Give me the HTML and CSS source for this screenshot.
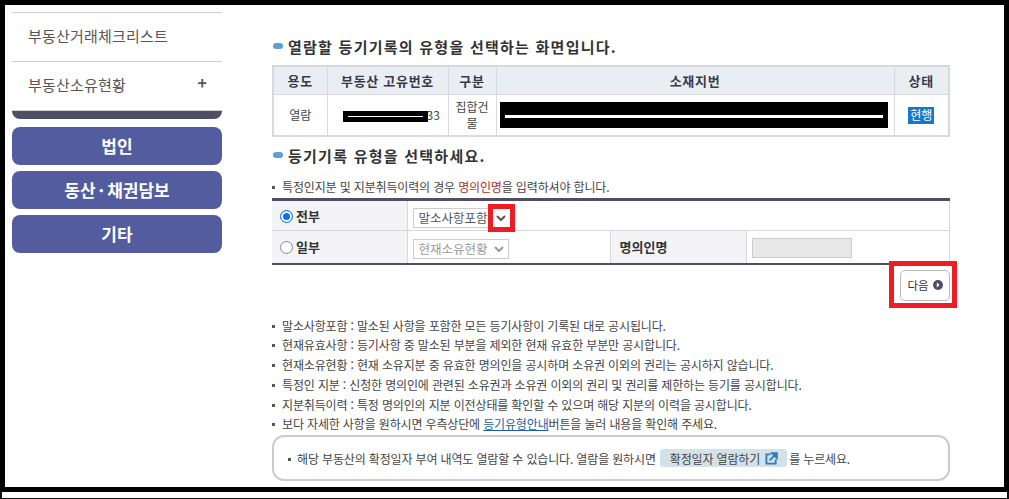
FILE: index.html
```html
<!DOCTYPE html>
<html lang="ko">
  <head>
    <meta charset="UTF-8">
    <title>등기기록 유형 선택</title>
    <link rel="stylesheet" href="styles.css">
  </head>
  <body>
    <div class="frame">
      <aside class="side">
        <div class="side-menu">
          <a class="side-item"><span>부동산거래체크리스트</span></a>
          <a class="side-item"><span>부동산소유현황</span> <span class="plus">+</span></a>
        </div>
        <div class="side-cap"></div>
        <a class="side-btn">법인</a>
        <a class="side-btn">동산<span class="dot">·</span>채권담보</a>
        <a class="side-btn">기타</a>
      </aside>

      <main class="content">
        <h3 class="title">열람할 등기기록의 유형을 선택하는 화면입니다.</h3>
        <table class="info">
          <colgroup>
            <col class="c-use">
            <col class="c-no">
            <col class="c-type">
            <col>
            <col class="c-state">
          </colgroup>
          <tr>
            <th>용도</th>
            <th>부동산 고유번호</th>
            <th>구분</th>
            <th>소재지번</th>
            <th>상태</th>
          </tr>
          <tr>
            <td>열람</td>
            <td class="no-cell"><span class="redact-no"><span class="strip-no"></span></span>33</td>
            <td>집합건물</td>
            <td class="addr-cell"><div class="redact-addr"><div class="strip-addr"></div></div></td>
            <td><span class="badge">현행</span></td>
          </tr>
        </table>

        <h3 class="title title2">등기기록 유형을 선택하세요.</h3>
        <p class="note">특정인지분 및 지분취득이력의 경우 <em>명의인명</em>을 입력하셔야 합니다.</p>

        <table class="pick">
          <colgroup>
            <col class="c-radio">
            <col class="c-sel">
            <col class="c-name">
            <col>
          </colgroup>
          <tr class="row-all">
            <th><span class="radio on"></span>전부</th>
            <td colspan="3" class="sel-cell">
              <span class="select-box">말소사항포함<span class="chev-mark"><svg class="chev" viewBox="0 0 10 6" width="10" height="6"><path d="M1 1l4 4 4-4" /></svg></span></span>
            </td>
          </tr>
          <tr class="row-part">
            <th><span class="radio"></span>일부</th>
            <td class="sel-cell">
              <span class="select-box off">현재소유현황<svg class="chev" viewBox="0 0 10 6" width="10" height="6"><path d="M1 1l4 4 4-4" /></svg></span>
            </td>
            <th>명의인명</th>
            <td class="sel-cell"><span class="name-input"></span></td>
          </tr>
        </table>

        <div class="next-row">
          <div class="next-mark">
            <a class="next-btn">다음 <svg viewBox="0 0 10 10" width="10" height="10"><circle cx="5" cy="5" r="5" fill="#4f4d66" /><path d="M3.8 2.6L6.6 5 3.8 7.4z" fill="#fff" /></svg></a>
          </div>
        </div>

        <ul class="guide">
          <li>말소사항포함 : 말소된 사항을 포함한 모든 등기사항이 기록된 대로 공시됩니다.</li>
          <li>현재유효사항 : 등기사항 중 말소된 부분을 제외한 현재 유효한 부분만 공시합니다.</li>
          <li>현재소유현황 : 현재 소유지분 중 유효한 명의인을 공시하며 소유권 이외의 권리는 공시하지 않습니다.</li>
          <li>특정인 지분 : 신청한 명의인에 관련된 소유권과 소유권 이외의 권리 및 권리를 제한하는 등기를 공시합니다.</li>
          <li>지분취득이력 : 특정 명의인의 지분 이전상태를 확인할 수 있으며 해당 지분의 이력을 공시합니다.</li>
          <li>보다 자세한 사항을 원하시면 우측상단에 <a class="link">등기유형안내</a>버튼을 눌러 내용을 확인해 주세요.</li>
        </ul>

        <div class="notice">
          <span class="notice-text">해당 부동산의 확정일자 부여 내역도 열람할 수 있습니다. 열람을 원하시면</span>
          <a class="date-btn">확정일자 열람하기
            <svg viewBox="0 0 14 14" width="13" height="13"><path d="M6 2.5H1.5v10h10V8" fill="none" stroke="#2f7fb5" stroke-width="2" /><path d="M5 9l7-7M7.5 1.2h5.3v5.3z" stroke="#2f7fb5" stroke-width="2" fill="#2f7fb5" /></svg>
          </a>
          <span>를 누르세요.</span>
        </div>
      </main>
    </div>
    <div class="bottom-strip"></div>
  </body>
</html>
```

FILE: styles.css
```css
html, body {
  margin: 0;
  height: 100%;
}

body {
  font-family: "Noto Sans CJK KR", "Noto Sans", sans-serif;
  background: #fff;
  color: #444;
  overflow: hidden;
}

.frame {
  display: flex;
  box-sizing: border-box;
  height: 492px;
  background: #fff;
  border: 5px solid #000;
  overflow: hidden;
}

.bottom-strip {
  box-sizing: border-box;
  height: 7px;
  background: #fff;
  border: solid #111;
  border-width: 0 2px 1px 2px;
}

.side {
  width: 210px;
  margin: 7px 0 0 7px;
  flex: none;
}

.side-menu {
  border-top: 1px solid #d0d0d0;
}

.side-item {
  display: flex;
  justify-content: space-between;
  align-items: center;
  box-sizing: border-box;
  height: 49px;
  padding: 0 15px 3px 16px;
  border-bottom: 1px solid #d0d0d0;
  font-size: 15px;
  letter-spacing: 0.2px;
  color: #555;
}

.plus {
  font-weight: bold;
  font-size: 16px;
  letter-spacing: 0;
  margin-bottom: 6px;
}

.side-cap {
  height: 8px;
  margin-bottom: 8px;
  background: #504e62;
  border-radius: 0 0 8px 8px;
}

.side-btn {
  display: block;
  height: 38px;
  line-height: 37px;
  margin-bottom: 6px;
  background: #535c9e;
  border-radius: 8px;
  color: #fff;
  font-size: 17px;
  font-weight: bold;
  text-align: center;
}

.dot {
  margin: 0 3px;
}

.content {
  width: 678px;
  margin: 0 0 0 50px;
  flex: none;
}

.title {
  position: relative;
  margin: 32px 0 0;
  padding-left: 16px;
  font-size: 15px;
  line-height: 20px;
  font-weight: bold;
  letter-spacing: 1.25px;
  color: #333;
}

.title::before {
  content: "";
  position: absolute;
  left: 1px;
  top: 6px;
  width: 10px;
  height: 6px;
  border-radius: 3px;
  background: #5aa0dc;
}

.title2 {
  margin-top: 9px;
}

table {
  width: 100%;
  border-collapse: collapse;
  table-layout: fixed;
}

.info {
  margin-top: 8px;
  border: 2px solid #d8d8de;
  font-size: 12px;
}

.info th, .info td {
  border: 1px solid #d8d8de;
  text-align: center;
}

.info th {
  height: 26px;
  padding: 0 0 1px;
  background: #e9eef2;
  color: #3a3a4a;
  font-size: 13px;
  letter-spacing: 0.7px;
}

.info td {
  height: 40px;
  padding: 0 2px;
  line-height: 16px;
}

.c-use { width: 54px; }
.c-no { width: 121px; }
.c-type { width: 48px; }
.c-state { width: 55px; }

.info .no-cell {
  padding-left: 15px;
  text-align: left;
  white-space: nowrap;
}

.redact-no {
  display: inline-block;
  box-sizing: border-box;
  width: 85px;
  height: 11px;
  padding-top: 5px;
  margin-right: -1px;
  vertical-align: middle;
  background: #000;
}

.strip-no {
  display: block;
  height: 1px;
  margin: 0 5px;
  background: #fff;
}

.info .addr-cell {
  padding: 0;
  text-align: left;
}

.redact-addr {
  box-sizing: border-box;
  width: 388px;
  height: 26px;
  margin-left: 3px;
  padding-top: 13px;
  background: #000;
}

.strip-addr {
  height: 3px;
  margin: 0 5px;
  background: #fff;
}

.badge {
  display: inline-block;
  width: 26px;
  height: 17px;
  line-height: 16px;
  background: #1477cc;
  color: #fff;
  font-size: 12px;
}

.note {
  position: relative;
  margin: 11px 0 0;
  padding-left: 10px;
  font-size: 12px;
  line-height: 20px;
  color: #444;
  letter-spacing: -0.15px;
}

.note::before, .guide li::before, .notice-text::before {
  content: "";
  position: absolute;
  left: 0;
  top: 9px;
  width: 3px;
  height: 3px;
  background: #555;
}

.note em {
  font-style: normal;
  color: #b03020;
}

.pick {
  margin-top: 1px;
  border-top: 3px solid #504e62;
  border-bottom: 2px solid #504e62;
  border-right: 1px solid #d8d8d8;
  font-size: 13px;
}

.pick th, .pick td {
  box-sizing: border-box;
  border: 1px solid #d8d8d8;
  padding: 0;
}

.row-all th, .row-all td {
  border-top: 0;
  height: 31px;
}

.row-part th, .row-part td {
  border-bottom: 0;
  height: 33px;
}

.pick th {
  padding-left: 9px;
  background: #f4f4f8;
  color: #333;
  text-align: left;
}

.row-all th:first-child, .row-part th:first-child {
  padding-left: 0;
  border-left: 0;
}

.c-radio { width: 135px; }
.c-sel { width: 203px; }
.c-name { width: 136px; }

.radio {
  display: inline-block;
  box-sizing: border-box;
  width: 13px;
  height: 13px;
  margin: 0 3px 0 8px;
  vertical-align: -2px;
  border: 1px solid #888;
  border-radius: 50%;
  background: #fff;
}

.radio.on {
  border: 1px solid #1a7de8;
  box-shadow: inset 0 0 0 2px #fff;
  background: #0a6ff0;
}

.pick .sel-cell {
  padding: 3px 0 0 5px;
}

.select-box {
  display: inline-flex;
  align-items: center;
  justify-content: space-between;
  box-sizing: border-box;
  width: 96px;
  height: 20px;
  padding: 0 4px 0 5px;
  border: 1px solid #ccc;
  font-size: 12.5px;
  color: #555;
  white-space: nowrap;
  position: relative;
  vertical-align: middle;
}

.select-box.off {
  color: #999;
}

.chev {
  flex: none;
  fill: none;
  stroke: #555;
  stroke-width: 2;
}

.off .chev {
  stroke: #999;
}

.chev-mark {
  position: absolute;
  right: -7px;
  top: -5px;
  display: flex;
  align-items: center;
  justify-content: center;
  box-sizing: border-box;
  width: 27px;
  height: 28px;
  border: 5px solid #ee1c25;
  background: #fff;
}

.name-input {
  display: block;
  box-sizing: border-box;
  width: 100px;
  height: 20px;
  background: #e8e8e8;
  border: 1px solid #ccc;
}

.next-row {
  display: flex;
  justify-content: flex-end;
  margin-top: -4px;
  margin-right: -7px;
  position: relative;
}

.next-mark {
  box-sizing: border-box;
  width: 68px;
  height: 47px;
  padding: 4px 2px 2px 6px;
  border: 5px solid #ee1c25;
}

.next-btn {
  display: flex;
  align-items: center;
  justify-content: center;
  gap: 4px;
  box-sizing: border-box;
  width: 50px;
  height: 31px;
  border: 1px solid #bbb;
  border-radius: 5px;
  font-size: 11.5px;
  color: #333;
}

.guide {
  list-style: none;
  margin: 8px 0 0;
  padding: 0;
  font-size: 12px;
  line-height: 19.8px;
  letter-spacing: -0.15px;
}

.guide li {
  position: relative;
  padding-left: 10px;
}

.link {
  color: #1b5fa8;
  text-decoration: underline;
}

.notice {
  display: flex;
  align-items: center;
  box-sizing: border-box;
  height: 46px;
  margin-top: 1px;
  padding: 0 0 0 23px;
  border: 2px solid #ccc;
  border-radius: 12px;
  font-size: 12px;
  letter-spacing: -0.15px;
  white-space: nowrap;
}

.notice-text {
  position: relative;
}

.notice-text::before {
  left: -9px;
  top: 8px;
}

.date-btn {
  display: inline-flex;
  align-items: center;
  gap: 5px;
  height: 18px;
  margin: 0 2px 0 4px;
  padding: 0 9px 0 10px;
  background: #d3e2e9;
  border-radius: 3px;
}
```
